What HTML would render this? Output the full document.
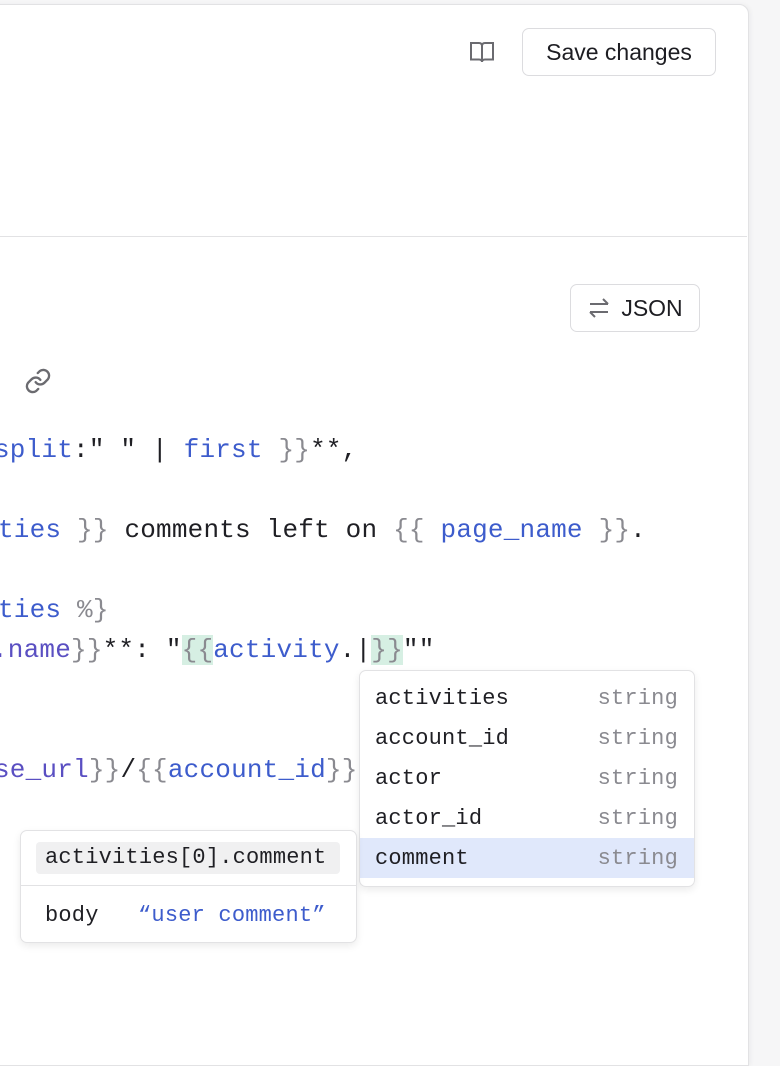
<!DOCTYPE html>
<html><head><style>
body{margin:0;width:780px;height:1024px;background:#f6f6f7;position:relative;overflow:hidden;font-family:"Liberation Sans",sans-serif}
.panel{position:absolute;left:-10px;top:4px;width:757px;height:1060px;background:#fff;border:1px solid #e2e2e4;border-radius:0 10px 0 0;box-shadow:2px 0 4px rgba(0,0,0,.04)}
.div{position:absolute;left:0;top:236px;width:747px;height:1px;background:#e2e2e4}
.btn{position:absolute;border:1px solid #dcdcdf;border-radius:7px;background:#fff;color:#1d1d22;font-size:23px;box-sizing:border-box;display:flex;align-items:center;justify-content:center}
.code{position:absolute;font-family:"Liberation Mono",monospace;font-size:26px;letter-spacing:0.2px;white-space:pre;color:#1f1f24;line-height:40px}
.b{color:#3d5ccc}.g{color:#8a8a90}.p{color:#5a4fc2}
.hl{background:#d6efe3}
.dd{position:absolute;left:359px;top:670px;width:334px;height:215px;background:#fff;border:1px solid #e2e2e4;border-radius:7px;box-shadow:0 3px 8px rgba(0,0,0,.08);overflow:hidden}
.row{height:40px;display:flex;justify-content:space-between;align-items:center;padding:0 16px 0 15px;font-family:"Liberation Mono",monospace;font-size:22px;letter-spacing:0.2px;color:#1f1f24}
.row span{color:#8a8a90}
.sel{background:#e0e8fb}
.pop{position:absolute;left:20px;top:830px;width:335px;height:111px;background:#fff;border:1px solid #e2e2e4;border-radius:7px;box-shadow:0 3px 8px rgba(0,0,0,.08);font-family:"Liberation Mono",monospace;font-size:22px;letter-spacing:0.2px;color:#1f1f24}
</style></head><body>
<div class="panel"></div>
<div class="div"></div>
<svg style="position:absolute;left:469px;top:40px" width="26" height="24" viewBox="0 0 26 24" fill="none" stroke="#6b6b70" stroke-width="2"><path d="M2 3h8c2 0 3 1 3 3v16c0-1.5-1-2.5-3-2.5H2z M24 3h-8c-2 0-3 1-3 3v16c0-1.5 1-2.5 3-2.5h8z"/></svg>
<div class="btn" style="left:522px;top:28px;width:194px;height:48px">Save changes</div>
<div class="btn" style="left:570px;top:284px;width:130px;height:48px"><svg width="24" height="22" viewBox="0 0 24 22" fill="none" stroke="#6b6b70" stroke-width="2" style="margin-right:10px"><path d="M3 7h18M16 2l5 5M21 15H3M8 20l-5-5"/></svg>JSON</div>
<svg style="position:absolute;left:24px;top:367px" width="28" height="28" viewBox="0 0 24 24" fill="none" stroke="#6b6b70" stroke-width="2" stroke-linecap="round"><path d="M10 13a5 5 0 0 0 7.5.5l3-3a5 5 0 0 0-7-7l-1.7 1.7"/><path d="M14 11a5 5 0 0 0-7.5-.5l-3 3a5 5 0 0 0 7 7l1.7-1.7"/></svg>
<div class="code" style="left:-6px;top:430px"><span class="b">split</span>:" " | <span class="b">first</span> <span class="g">}}</span>**,</div>
<div class="code" style="left:-2px;top:510px"><span class="b">ties</span> <span class="g">}}</span> comments left on <span class="g">{{</span> <span class="b">page_name</span> <span class="g">}}</span>.</div>
<div class="code" style="left:-2px;top:590px"><span class="b">ties</span> <span class="g">%}</span></div>
<div class="code" style="left:-8px;top:630px"><span class="p">.name</span><span class="g">}}</span>**: "<span class="g hl">{{</span><span class="b">activity</span>.|<span class="g hl">}}</span>""</div>
<div class="code" style="left:-6px;top:750px"><span class="p">se_url</span><span class="g">}}</span>/<span class="g">{{</span><span class="b">account_id</span><span class="g">}}</span></div>
<div class="dd"><div style="height:7px"></div>
<div class="row">activities<span>string</span></div>
<div class="row">account_id<span>string</span></div>
<div class="row">actor<span>string</span></div>
<div class="row">actor_id<span>string</span></div>
<div class="row sel">comment<span>string</span></div>
</div>
<div class="pop">
<div style="position:absolute;left:15px;top:11px;width:304px;height:32px;background:#f0f0f1;border-radius:4px;line-height:32px;padding-left:9px;box-sizing:border-box">activities[0].comment</div>
<div style="position:absolute;left:0;right:0;top:54px;height:1px;background:#e2e2e4"></div>
<div style="position:absolute;left:24px;top:72px">body <span style="color:#3d5ccc;margin-left:26px">“user comment”</span></div>
</div>
</body></html>
